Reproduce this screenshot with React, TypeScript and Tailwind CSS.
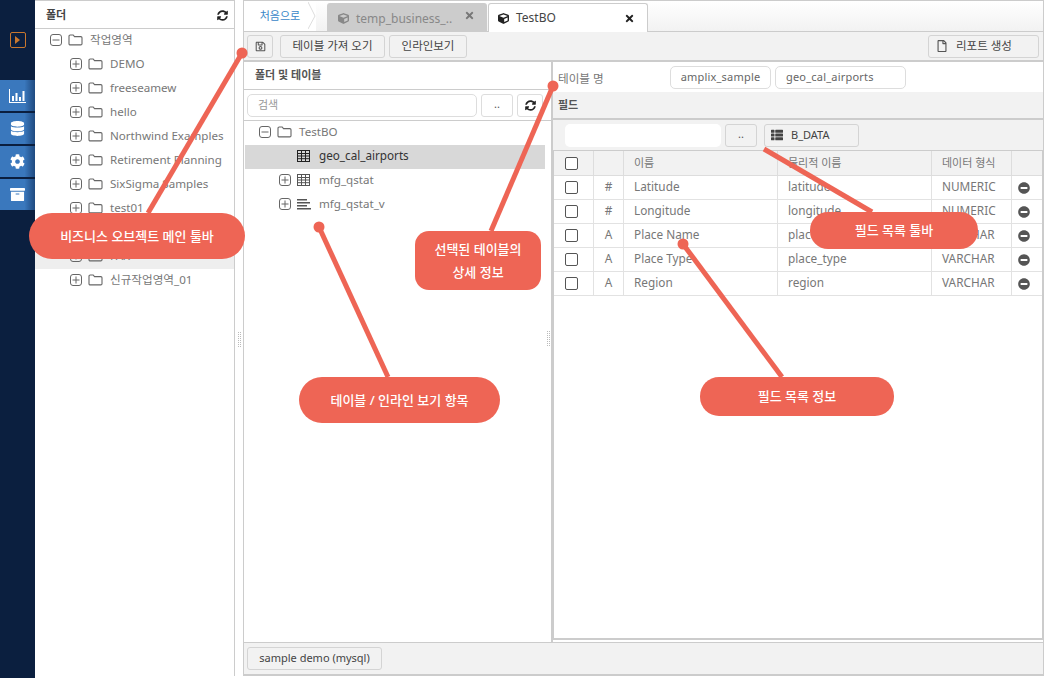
import { FaSyncAlt, FaMinusCircle, FaTimes, FaCube, FaThList, FaDatabase, FaCog, FaArchive, FaRegFile, FaRegSave } from 'react-icons/fa';
import type { ReactNode } from 'react';

const FONT = "font-['Noto_Sans','Noto_Sans_CJK_KR',sans-serif]";

const PlusBox = ({ minus = false }: { minus?: boolean }) => (
  <svg width="12" height="12" viewBox="0 0 12 12" className="shrink-0 text-[#666]" fill="none" stroke="currentColor">
    <rect x="0.5" y="0.5" width="11" height="11" rx="2.5" />
    <path d="M2.5 6h7" />
    {!minus && <path d="M6 2.5v7" />}
  </svg>
);

const FolderIcon = () => (
  <svg width="15" height="12" viewBox="0 0 15 12" className="shrink-0 text-[#666]" fill="none" stroke="currentColor" strokeWidth="1.1">
    <path d="M1 2.2C1 1.5 1.5 1 2.2 1h3l1.3 1.6h6.3c.7 0 1.2.5 1.2 1.2v5.9c0 .7-.5 1.2-1.2 1.2H2.2c-.7 0-1.2-.5-1.2-1.2z" />
  </svg>
);

const TableIcon = ({ dark = false }: { dark?: boolean }) => (
  <svg width="13" height="12" viewBox="0 0 13 12" className={`shrink-0 ${dark ? 'text-[#222]' : 'text-[#555]'}`} fill="none" stroke="currentColor">
    <rect x="0.5" y="0.5" width="12" height="11" />
    <path d="M0.5 3.5h12M0.5 6h12M0.5 8.7h12M4.5 1v10M8.5 1v10" />
  </svg>
);

const LinesIcon = () => (
  <svg width="14" height="12" viewBox="0 0 14 12" className="shrink-0 text-[#555]" fill="currentColor">
    <rect x="0" y="1" width="10" height="1.5" />
    <rect x="0" y="4" width="13" height="1.5" />
    <rect x="0" y="7" width="10" height="1.5" />
    <rect x="0" y="10" width="14" height="1.5" />
  </svg>
);

const ChartIcon = () => (
  <svg width="17" height="14" viewBox="0 0 17 14" fill="white">
    <rect x="0" y="0" width="1" height="14" />
    <rect x="0" y="13" width="17" height="1" />
    <rect x="3" y="7" width="2" height="5" />
    <rect x="6.5" y="4" width="2" height="8" />
    <rect x="10" y="8" width="2" height="4" />
    <rect x="13.5" y="2" width="2" height="10" />
  </svg>
);

const Btn = ({ className = '', children }: { className?: string; children: ReactNode }) => (
  <div className={`flex h-[23px] items-center justify-center rounded-[3px] border border-[#d4d4d4] bg-[#f2f2f2] text-[11.5px] text-[#444] ${className}`}>
    {children}
  </div>
);

const SideButton = ({ children }: { children: ReactNode }) => (
  <div className="flex h-[31px] w-[35px] items-center justify-center bg-gradient-to-r from-[#3a78bd] from-70% to-[#1f4a80]">
    {children}
  </div>
);

const folders = ['DEMO', 'freeseamew', 'hello', 'Northwind Examples', 'Retirement Planning', 'SixSigma Samples', 'test01', '공유', 'FAX', '신규작업영역_01'];

const fields = [
  { t: '#', name: 'Latitude', phys: 'latitude', type: 'NUMERIC' },
  { t: '#', name: 'Longitude', phys: 'longitude', type: 'NUMERIC' },
  { t: 'A', name: 'Place Name', phys: 'place_name', type: 'VARCHAR' },
  { t: 'A', name: 'Place Type', phys: 'place_type', type: 'VARCHAR' },
  { t: 'A', name: 'Region', phys: 'region', type: 'VARCHAR' },
];

const Check = () => <div className="h-[13px] w-[13px] rounded-[2px] border border-[#555] bg-white" />;

const Grip = () => (
  <div className="grid grid-cols-2 gap-px">
    {Array.from({ length: 16 }).map((_, i) => (
      <div key={i} className="h-px w-px bg-[#bbb]" />
    ))}
  </div>
);

const Callout = ({ className, children }: { className: string; children: ReactNode }) => (
  <div className={`absolute flex items-center justify-center bg-[#ee6555] text-center text-[13px] font-medium leading-[23px] text-white ${className}`}>
    {children}
  </div>
);

const App = () => {
  return (
    <div className={`relative flex h-[678px] w-[1048px] overflow-hidden bg-white ${FONT}`}>
      {/* Left nav */}
      <div className="flex h-full w-[35px] shrink-0 flex-col bg-[#0b1f3f]">
        <div className="mt-[32px] flex justify-center">
          <div className="flex h-[16px] w-[16px] items-center justify-center rounded-[2px] border border-[#c9772e]">
            <div className="h-0 w-0 border-y-[4px] border-l-[5px] border-y-transparent border-l-[#c9772e]" />
          </div>
        </div>
        <div className="mt-[32px] flex flex-col gap-[2px]">
          <SideButton><ChartIcon /></SideButton>
          <SideButton><FaDatabase className="text-[15px] text-white" /></SideButton>
          <SideButton><FaCog className="text-[15px] text-white" /></SideButton>
          <SideButton><FaArchive className="text-[15px] text-white" /></SideButton>
        </div>
      </div>

      {/* Folder panel */}
      <div className="flex h-[676px] w-[200px] shrink-0 flex-col border-r border-t border-[#ccc]">
        <div className="flex h-[28px] shrink-0 items-center justify-between border-b border-[#ccc] pl-[11px] pr-[6px] pt-px">
          <span className="text-[11px] font-semibold text-[#444]">폴더</span>
          <FaSyncAlt className="text-[11px] text-[#222]" />
        </div>
        <div className="flex h-[24px] items-center pb-[2px] pl-[15px]">
          <PlusBox minus />
          <span className="ml-[6px]"><FolderIcon /></span>
          <span className="ml-[7px] text-[11.6px] text-[#777]">작업영역</span>
        </div>
        {folders.map((f, i) => (
          <div key={f} className={`flex h-[24px] items-center pb-[2px] pl-[35px] ${i === 8 ? 'bg-[#eee]' : ''}`}>
            <PlusBox />
            <span className="ml-[6px]"><FolderIcon /></span>
            <span className="ml-[7px] whitespace-nowrap text-[11.6px] text-[#777]">{f}</span>
          </div>
        ))}
      </div>

      {/* Splitter */}
      <div className="flex h-full w-[8px] shrink-0 items-center justify-center pt-[1px]">
        <Grip />
      </div>

      {/* Main */}
      <div className="flex h-[676px] w-[801px] shrink-0 flex-col border-x border-b-2 border-t border-[#ccc]">
        {/* Tabs */}
        <div className="flex h-[31px] shrink-0 items-end border-b border-[#ccc] bg-gradient-to-b from-white to-[#f2f2f2]">
          <div className="relative flex h-[30px] w-[72px] shrink-0 items-center justify-center bg-white pb-[1px] pt-[2px] text-[11px] text-[#3a87c8]">
            처음으로
            <svg width="8" height="29" viewBox="0 0 8 29" className="absolute right-0 top-0" fill="none" stroke="#ddd">
              <path d="M0 1l7 14-7 13" />
            </svg>
          </div>
          <div className="ml-[11px] flex h-[28px] w-[160px] shrink-0 items-center rounded-t-[3px] bg-[#ccc] pl-[11px] pr-[12px] pt-[3px] text-[12px] text-[#888]">
            <FaCube className="text-[11px] text-[#888]" />
            <span className="ml-[7px] flex-1">temp_business_..</span>
            <FaTimes className="relative top-[-3px] text-[11px] text-[#777]" />
          </div>
          <div className="relative top-px ml-px flex h-[29px] w-[160px] shrink-0 items-center rounded-t-[3px] border-x border-t border-[#ccc] bg-white pl-[9px] pr-[12px] text-[12px] text-[#444]">
            <FaCube className="text-[11px] text-[#222]" />
            <span className="ml-[7px] flex-1">TestBO</span>
            <FaTimes className="text-[11px] text-[#222]" />
          </div>
        </div>

        {/* Toolbar */}
        <div className="flex h-[30px] shrink-0 items-center border-b-2 border-[#ccc] bg-[#f2f2f2] pl-[3px] pr-[4px]">
          <Btn className="w-[26px]"><FaRegSave className="text-[11px] text-[#555]" /></Btn>
          <Btn className="ml-[7px] w-[105px]">테이블 가져 오기</Btn>
          <Btn className="ml-[4px] w-[78px]">인라인보기</Btn>
          <Btn className="ml-auto w-[111px] justify-start pl-[7px]">
            <FaRegFile className="text-[12px] text-[#555]" />
            <span className="ml-[8px]">리포트 생성</span>
          </Btn>
        </div>

        {/* Body */}
        <div className="flex min-h-0 flex-1">
          {/* Folder and table tree */}
          <div className="flex w-[309px] shrink-0 flex-col border-r-2 border-[#ccc]">
            <div className="flex h-[28px] shrink-0 items-center border-b border-[#ccc] pl-[11px] text-[11px] font-semibold text-[#555]">
              폴더 및 테이블
            </div>
            <div className="flex h-[31px] shrink-0 items-center border-b border-[#ccc] pl-[3px]">
              <div className="flex h-[23px] w-[230px] items-center rounded-[5px] border border-[#ddd] bg-white pl-[10px] text-[11px] text-[#999]">검색</div>
              <div className="ml-[4px] flex h-[23px] w-[32px] items-center justify-center rounded-[3px] border border-[#ddd] pb-[2px] text-[11px] text-[#555]">..</div>
              <div className="ml-[4px] flex h-[23px] w-[26px] items-center justify-center rounded-[3px] border border-[#ddd]"><FaSyncAlt className="text-[11px] text-[#222]" /></div>
            </div>
            <div className="flex h-[24px] items-center pb-[2px] pl-[15px]">
              <PlusBox minus />
              <span className="ml-[6px]"><FolderIcon /></span>
              <span className="ml-[7px] text-[11.6px] text-[#777]">TestBO</span>
            </div>
            <div className="ml-px flex h-[24px] w-[300px] items-center bg-[#d8d8d8] pb-[2px] pl-[52px] text-[11.7px] text-[#333]">
              <TableIcon dark />
              <span className="ml-[9px]">geo_cal_airports</span>
            </div>
            <div className="flex h-[24px] items-center pb-[2px] pl-[35px] text-[11.6px] text-[#777]">
              <PlusBox />
              <span className="ml-[6px]"><TableIcon /></span>
              <span className="ml-[9px]">mfg_qstat</span>
            </div>
            <div className="flex h-[24px] items-center pb-[2px] pl-[35px] text-[11.6px] text-[#777]">
              <PlusBox />
              <span className="ml-[6px]"><LinesIcon /></span>
              <span className="ml-[8px]">mfg_qstat_v</span>
            </div>
            <div className="mt-[114px] flex justify-end pr-px">
              <Grip />
            </div>
          </div>

          {/* Detail */}
          <div className="mb-[2px] flex min-w-0 flex-1 flex-col border-b border-[#ccc]">
            <div className="flex h-[30px] shrink-0 items-center pl-[5px]">
              <span className="w-[112px] pt-[3px] text-[11.6px] text-[#777]">테이블 명</span>
              <div className="flex h-[23px] w-[101px] items-center justify-center rounded-[5px] border border-[#ddd] text-[11px] tracking-[0.2px] text-[#666]">amplix_sample</div>
              <div className="ml-[4px] flex h-[23px] w-[131px] items-center rounded-[5px] border border-[#ddd] pl-[10px] text-[11px] tracking-[0.2px] text-[#666]">geo_cal_airports</div>
            </div>
            <div className="flex h-[28px] shrink-0 items-center border-b-2 border-[#ccc] bg-[#f2f2f2] pl-[5px] pt-[1px] text-[11px] font-semibold text-[#555]">필드</div>
            <div className="flex h-[30px] shrink-0 items-center bg-[#f2f2f2] pl-[12px]">
              <div className="h-[23px] w-[156px] rounded-[5px] bg-white" />
              <div className="ml-[4px] flex h-[23px] w-[32px] items-center justify-center rounded-[3px] border border-[#d4d4d4] pb-[2px] text-[11px] text-[#555]">..</div>
              <div className="ml-[7px] flex h-[23px] w-[95px] items-center rounded-[3px] border border-[#d4d4d4] pl-[6px] text-[11px] text-[#444]">
                <FaThList className="text-[12px] text-[#444]" />
                <span className="ml-[8px]">B_DATA</span>
              </div>
            </div>

            {/* Field table */}
            <div className="grid min-h-0 flex-1 grid-cols-[40px_30px_154px_154px_80px_1fr] grid-rows-[25px] auto-rows-[24px] content-start border-b border-l border-r border-t border-[#ccc] text-[11.8px] text-[#777]">
              <div className="flex items-center justify-center border-b border-r border-[#ddd] bg-[#f2f2f2] pr-[4px]"><Check /></div>
              <div className="border-b border-r border-[#ddd] bg-[#f2f2f2]" />
              <div className="flex items-center border-b border-r border-[#ddd] bg-[#f2f2f2] pl-[10px] text-[11px]">이름</div>
              <div className="flex items-center border-b border-r border-[#ddd] bg-[#f2f2f2] pl-[10px] text-[11px]">물리적 이름</div>
              <div className="flex items-center border-b border-r border-[#ddd] bg-[#f2f2f2] pl-[10px] text-[11px]">데이터 형식</div>
              <div className="border-b border-[#ddd] bg-[#f2f2f2]" />
              {fields.map((f) => (
                <div key={f.name} className="contents">
                  <div className="flex items-center justify-center border-b border-r border-[#e2e2e2] pr-[4px]"><Check /></div>
                  <div className="flex items-center justify-center border-b border-r border-[#e2e2e2] pb-[1px]">{f.t}</div>
                  <div className="flex items-center border-b border-r border-[#e2e2e2] pb-[1px] pl-[10px]">{f.name}</div>
                  <div className="flex items-center border-b border-r border-[#e2e2e2] pb-[1px] pl-[10px]">{f.phys}</div>
                  <div className="flex items-center border-b border-r border-[#e2e2e2] pb-[1px] pl-[10px]">{f.type}</div>
                  <div className="flex items-center justify-center border-b border-[#e2e2e2] pr-[6px]"><FaMinusCircle className="text-[12px] text-[#555]" /></div>
                </div>
              ))}
            </div>
          </div>
        </div>

        {/* Bottom bar */}
        <div className="flex h-[32px] shrink-0 items-center border-t border-[#ccc] bg-[#f2f2f2] pl-[3px]">
          <Btn className="w-[135px] !text-[11px]">sample demo (mysql)</Btn>
        </div>
      </div>

      {/* Annotation lines */}
      <svg width="1048" height="678" className="pointer-events-none absolute left-0 top-0" fill="#ee6555" stroke="#ee6555" strokeWidth="5">
        <path d="M242 53L148 213" />
        <circle cx="242" cy="53" r="5.5" stroke="none" />
        <path d="M553 86L491 231" />
        <circle cx="553" cy="86" r="5.5" stroke="none" />
        <path d="M319 227L388 377" />
        <circle cx="319" cy="227" r="5.5" stroke="none" />
        <path d="M764 149L872 212" />
        <path d="M683 244L782 377" />
        <circle cx="683" cy="244" r="5.5" stroke="none" />
      </svg>

      <Callout className="left-[29px] top-[213px] h-[46px] w-[216px] rounded-[23px]">비즈니스 오브젝트 메인 툴바</Callout>
      <Callout className="left-[415px] top-[231px] h-[59px] w-[126px] rounded-[14px]">선택된 테이블의<br />상세 정보</Callout>
      <Callout className="left-[810px] top-[212px] h-[37px] w-[168px] rounded-[18px]">필드 목록 툴바</Callout>
      <Callout className="left-[299px] top-[377px] h-[46px] w-[201px] rounded-[23px]">테이블 / 인라인 보기 항목</Callout>
      <Callout className="left-[700px] top-[377px] h-[39px] w-[194px] rounded-[19px]">필드 목록 정보</Callout>
    </div>
  );
};

export default App;
